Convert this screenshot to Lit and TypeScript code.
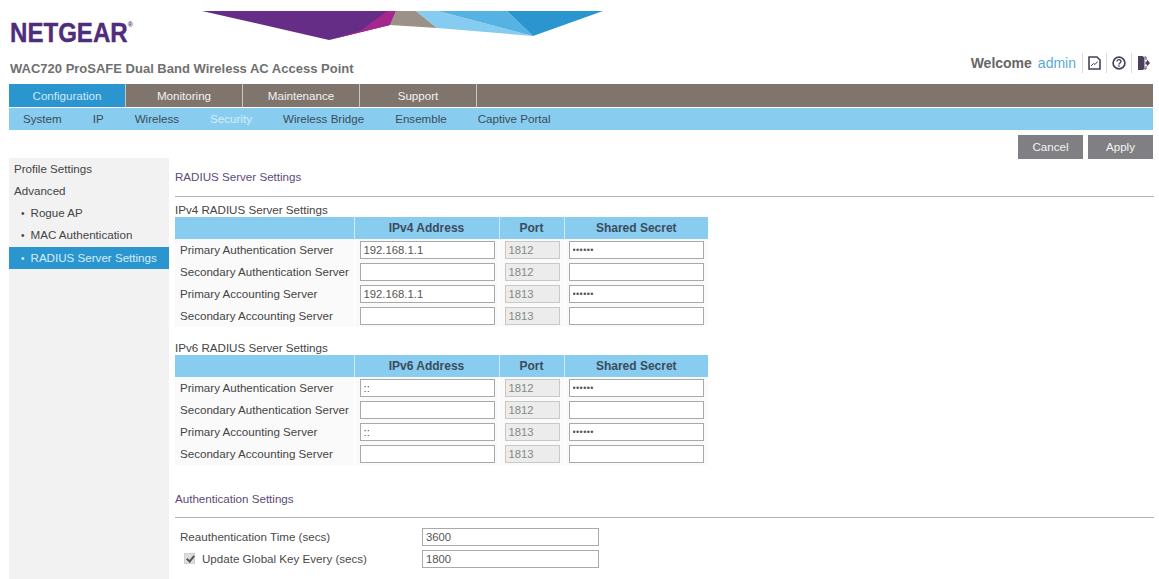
import { LitElement, html, css } from 'lit'
import { customElement } from 'lit/decorators.js'

const TABS = ['Configuration', 'Monitoring', 'Maintenance', 'Support']
const SUBS = ['System', 'IP', 'Wireless', 'Security', 'Wireless Bridge', 'Ensemble', 'Captive Portal']

const rows = (ip: string) => [
  { label: 'Primary Authentication Server', ip, port: '1812', secret: true },
  { label: 'Secondary Authentication Server', ip: '', port: '1812', secret: false },
  { label: 'Primary Accounting Server', ip, port: '1813', secret: true },
  { label: 'Secondary Accounting Server', ip: '', port: '1813', secret: false },
]

@customElement('app-root')
export class AppRoot extends LitElement {
  static override styles = css`
    :host {
      display: block;
      width: 1159px;
      height: 579px;
      overflow: hidden;
      background: #fff;
      font-family: 'Liberation Sans', Arial, sans-serif;
      font-size: 11.6px;
      color: #4a4a4a;
    }
    .header {
      position: relative;
      height: 84px;
      padding: 0 9px 0 10px;
      box-sizing: border-box;
    }
    .banner {
      position: absolute;
      left: 0;
      top: 0;
    }
    .logo {
      padding-top: 18px;
      height: 30px;
      font-size: 27.5px;
      line-height: 30px;
      font-weight: 700;
      color: #4f2c7c;
      -webkit-text-stroke: 0.4px #4f2c7c;
      transform: scaleX(0.875);
      transform-origin: left top;
      white-space: nowrap;
    }
    .logo sup {
      font-size: 8px;
      font-weight: 700;
      vertical-align: 15px;
      line-height: 0;
      -webkit-text-stroke: 0;
    }
    .title-row {
      display: flex;
      justify-content: space-between;
      align-items: flex-start;
      margin-top: 4px;
    }
    .title {
      margin-top: 9px;
      font-size: 13px;
      line-height: 16px;
      font-weight: 700;
      color: #707070;
    }
    .welcome {
      display: flex;
      align-items: center;
      height: 20px;
      margin-top: 1px;
      font-size: 14px;
      font-weight: 700;
      color: #666;
    }
    .welcome .user {
      font-weight: 400;
      color: #5aa9d6;
      margin-left: 6px;
      margin-right: 6px;
    }
    .tool {
      display: flex;
      align-items: center;
      height: 20px;
      padding: 0 5px;
      border-left: 1px solid #dcdcdc;
    }
    .tool:last-child {
      padding: 0 0 0 6px;
    }
    .nav {
      margin: 0 6px 0 9px;
    }
    .tabs {
      display: flex;
      height: 23px;
      background: #7f756d;
    }
    .tab {
      box-sizing: border-box;
      width: 117px;
      border-right: 1px solid #c9c5c1;
      text-align: center;
      line-height: 23px;
      color: #f4f2f0;
    }
    .tab.active {
      background: #2b95cf;
      color: #cfeaf8;
    }
    .subs {
      display: flex;
      gap: 31px;
      height: 22px;
      margin-top: 1px;
      background: #88cdf0;
      padding-left: 14px;
    }
    .sub {
      line-height: 22px;
      color: #3d4b55;
      white-space: nowrap;
    }
    .sub.active {
      color: #d8eefa;
    }
    .actions {
      display: flex;
      justify-content: flex-end;
      gap: 5px;
      margin: 5px 6px 0 0;
      height: 24px;
    }
    .btn {
      width: 65px;
      background: #807f83;
      color: #f4f4f4;
      line-height: 24px;
      text-align: center;
    }
    .body {
      display: flex;
      margin-top: -1px;
      padding: 0 5px 0 9px;
    }
    .side {
      width: 160px;
      flex: none;
      height: 421px;
      background: #f2f2f2;
      margin-right: 6px;
    }
    .side div {
      height: 22px;
      line-height: 22px;
      padding-left: 5px;
      white-space: nowrap;
      color: #444;
    }
    .side .item {
      padding-left: 12px;
    }
    .side .item::before {
      content: '•';
      margin-right: 6px;
      font-size: 10px;
    }
    .side .on {
      margin-top: 1px;
      background: #2b95cf;
      color: #d5edf9;
    }
    .main {
      flex: 1;
      min-width: 0;
    }
    h2 {
      margin: 0;
      font-size: 11.6px;
      font-weight: 400;
      color: #5b4a78;
    }
    .sec-head {
      border-bottom: 1px solid #b3b3b3;
      height: 38px;
      line-height: 38px;
    }
    .cap {
      height: 20px;
      line-height: 26px;
      color: #444;
    }
    table {
      border-collapse: collapse;
      table-layout: fixed;
      width: 533px;
    }
    th {
      height: 22px;
      padding: 0;
      background: #88cdf0;
      border-left: 1px solid #cfeaf8;
      color: #3d4b5c;
      font-size: 12px;
    }
    th:first-child {
      border-left: none;
    }
    td {
      box-sizing: border-box;
      height: 22px;
      padding: 0 0 0 5px;
      border-left: 1px solid #fff;
      background: #fafafa;
      white-space: nowrap;
      color: #444;
    }
    td:first-child {
      border-left: none;
      padding-bottom: 2px;
    }
    td:last-child {
      padding-left: 4px;
    }
    input[type='text'],
    input[type='password'] {
      display: block;
      box-sizing: border-box;
      width: 135px;
      height: 18px;
      margin: 0;
      padding: 0 3px;
      border: 1px solid #a9a9a9;
      border-radius: 0;
      background: #fff;
      font: 11.3px 'Liberation Sans', Arial, sans-serif;
      color: #555;
      outline: none;
    }
    input[type='password'] {
      font-size: 9px;
      letter-spacing: 0.4px;
    }
    input:disabled {
      width: 55px !important;
      background: #ececec;
      border-color: #c8c8c8;
      color: #888;
    }
    .gap {
      height: 8px;
    }
    .auth-head {
      margin-top: 16px;
      height: 36px;
      line-height: 36px;
    }
    .auth-rows {
      margin-top: 8px;
    }
    .form-row {
      display: flex;
      align-items: center;
      height: 22px;
      padding-left: 5px;
    }
    .form-row label {
      display: flex;
      align-items: center;
      width: 242px;
      flex: none;
      padding-bottom: 2px;
      white-space: nowrap;
    }
    .form-row input[type='text'] {
      width: 177px;
    }
    .form-row input[type='checkbox'] {
      appearance: none;
      position: relative;
      box-sizing: border-box;
      width: 11px;
      height: 11px;
      margin: 0 7px 0 4px;
      background: #dedede;
      border: 1px solid #d0d0d0;
    }
    .form-row input[type='checkbox']::after {
      content: '';
      position: absolute;
      left: 2.5px;
      top: 0;
      width: 3px;
      height: 6px;
      border: solid #555;
      border-width: 0 2px 2px 0;
      transform: rotate(40deg);
    }
  `

  private _table(title: string, head: string, ip: string) {
    return html`
      <div class="cap">${title}</div>
      <table>
        <colgroup>
          <col style="width:179px" />
          <col style="width:145px" />
          <col style="width:65px" />
          <col style="width:144px" />
        </colgroup>
        <tr>
          <th></th>
          <th>${head}</th>
          <th>Port</th>
          <th>Shared Secret</th>
        </tr>
        ${rows(ip).map(
          (r) => html`
            <tr>
              <td>${r.label}</td>
              <td><input type="text" .value=${r.ip} /></td>
              <td><input type="text" disabled .value=${r.port} /></td>
              <td>
                <input type="password" .value=${r.secret ? 'secret' : ''} />
              </td>
            </tr>
          `,
        )}
      </table>
    `
  }

  override render() {
    return html`
      <div class="header">
        <svg class="banner" width="620" height="45" viewBox="0 0 620 45">
          <polygon points="202,11 396,11 390,25 329,40" fill="#662d87" />
          <polygon points="387,11 396,11 390,25 329,40 360,31" fill="#a3278f" />
          <polygon points="396,11 416,11 437,28 390,25" fill="#9c9189" />
          <polygon points="416,11 438,11 533,36 437,28" fill="#86ccf0" />
          <polygon points="438,11 507,11 533,36" fill="#55b2e2" />
          <polygon points="507,11 603,11 533,36" fill="#2b95cf" />
        </svg>
        <div class="logo">NETGEAR<sup>®</sup></div>
        <div class="title-row">
          <div class="title">WAC720 ProSAFE Dual Band Wireless AC Access Point</div>
          <div class="welcome">
            Welcome <span class="user">admin</span>
            <span class="tool">
              <svg width="13" height="14" viewBox="0 0 13 14" fill="none" stroke="#4a3f5c" stroke-width="1.600">
                <path d="M1 1h8l3 3v9h-11z" />
                <path d="M3 10l2.500-2.500 1.500 1 2.500-3" stroke-width="1" />
              </svg>
            </span>
            <span class="tool">
              <svg width="14" height="14" viewBox="0 0 14 14" fill="none" stroke="#4a3f5c" stroke-width="1.700">
                <circle cx="7" cy="7" r="5.900" />
                <path d="M5 5.600c0-2.800 4.200-2.500 4 0 0 1.400-2 1.400-2 2.800" stroke-width="1.400" />
                <path d="M7 9.300v1.500" stroke-width="1.400" />
              </svg>
            </span>
            <span class="tool">
              <svg width="12" height="14" viewBox="0 0 12 14">
                <path d="M0 0h4.500l2 1.500v11.500l-2 1h-4.500z" fill="#4a3f5c" />
                <path d="M6.500 1h1.500v3M8 10v3h-1.500" fill="none" stroke="#4a3f5c" />
                <path d="M7.500 5.500h1.500v-2l3 3.500-3 3.500v-2h-1.500z" fill="#4a3f5c" />
              </svg>
            </span>
          </div>
        </div>
      </div>

      <div class="nav">
        <div class="tabs">
          ${TABS.map(
            (t, i) => html`<div class="tab ${i === 0 ? 'active' : ''}">${t}</div>`,
          )}
        </div>
        <div class="subs">
          ${SUBS.map(
            (s) => html`<div class="sub ${s === 'Security' ? 'active' : ''}">${s}</div>`,
          )}
        </div>
      </div>

      <div class="actions">
        <div class="btn">Cancel</div>
        <div class="btn">Apply</div>
      </div>

      <div class="body">
        <div class="side">
          <div>Profile Settings</div>
          <div>Advanced</div>
          <div class="item">Rogue AP</div>
          <div class="item">MAC Authentication</div>
          <div class="item on">RADIUS Server Settings</div>
        </div>
        <div class="main">
          <h2 class="sec-head">RADIUS Server Settings</h2>
          ${this._table('IPv4 RADIUS Server Settings', 'IPv4 Address', '192.168.1.1')}
          <div class="gap"></div>
          ${this._table('IPv6 RADIUS Server Settings', 'IPv6 Address', '::')}
          <h2 class="sec-head auth-head">Authentication Settings</h2>
          <div class="auth-rows">
            <div class="form-row">
              <label>Reauthentication Time (secs)</label>
              <input type="text" .value=${'3600'} />
            </div>
            <div class="form-row">
              <label><input type="checkbox" checked />Update Global Key Every (secs)</label>
              <input type="text" .value=${'1800'} />
            </div>
          </div>
        </div>
      </div>
    `
  }
}
